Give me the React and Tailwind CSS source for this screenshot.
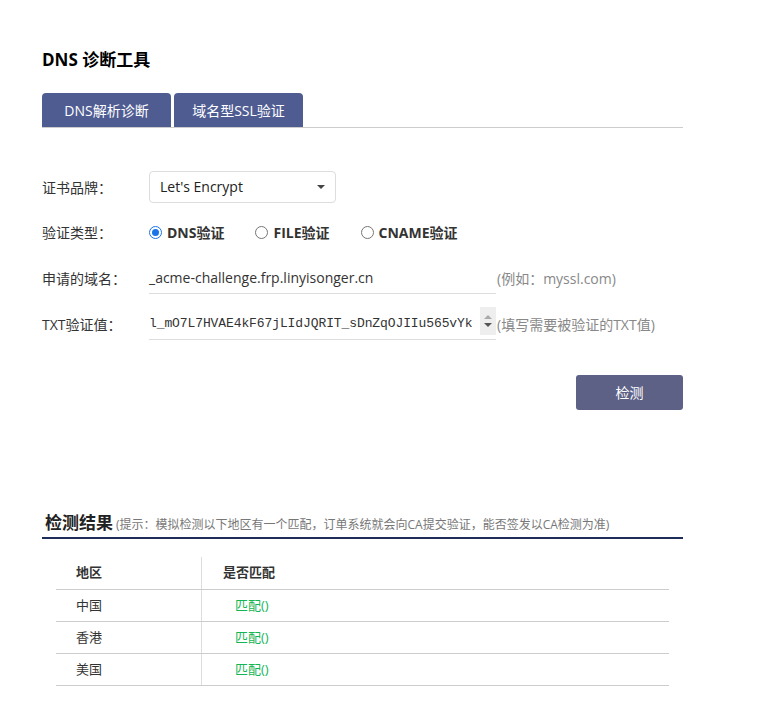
import { useState } from "react";

const rows = ["中国", "香港", "美国"];

const Label = ({ children }) => (
  <div className="w-[107px] shrink-0 text-[14px] text-[#333]">{children}</div>
);

const Radio = ({ checked, label }) => (
  <label className="flex items-center gap-[5px] mr-[31px]">
    <span
      className={
        checked
          ? "w-[13px] h-[13px] rounded-full border border-[#1a73e8] flex items-center justify-center"
          : "w-[13px] h-[13px] rounded-full border border-[#767676]"
      }
    >
      {checked && <span className="w-[7px] h-[7px] rounded-full bg-[#1a73e8]" />}
    </span>
    <span className="font-bold text-[14px] text-[#333]">{label}</span>
  </label>
);

export default function App() {
  const [tab, setTab] = useState(0);

  return (
    <div className="w-[783px] h-[722px] bg-white font-['Open_Sans','Noto_Sans_CJK_SC',sans-serif] text-[#333]">
      <div className="pl-[42px] pt-[48px] w-[683px]">
        <h1 className="text-[17px] font-bold text-black leading-[24px]">DNS 诊断工具</h1>

        <div className="mt-[21px] flex items-end gap-[3px] border-b border-[#ccc]">
          {["DNS解析诊断", "域名型SSL验证"].map((t, i) => (
            <button
              key={t}
              onClick={() => setTab(i)}
              className="w-[129px] h-[34px] rounded-t-[4px] bg-[#4f5c92] text-white text-[14px]"
            >
              {t}
            </button>
          ))}
        </div>

        <div className="mt-[43px] flex flex-col">
          <div className="flex items-center h-[32px]">
            <Label>证书品牌：</Label>
            <div className="w-[187px] h-[32px] border border-[#ddd] rounded-[4px] flex items-center justify-between px-[10px]">
              <span className="text-[14px] text-[#222] mt-[-2px]">Let's Encrypt</span>
              <span className="w-0 h-0 border-l-[4px] border-r-[4px] border-t-[4px] border-l-transparent border-r-transparent border-t-[#444]" />
            </div>
          </div>

          <div className="flex items-center h-[32px] mt-[13px]">
            <Label>验证类型：</Label>
            <Radio checked label="DNS验证" />
            <Radio label="FILE验证" />
            <Radio label="CNAME验证" />
          </div>

          <div className="flex items-center mt-[14px]">
            <Label>申请的域名：</Label>
            <div className="w-[347px] h-[32px] border-b border-[#ddd] flex items-center text-[14px] text-[#333]">
              _acme-challenge.frp.linyisonger.cn
            </div>
            <span className="ml-[1px] text-[14px] text-[#888]">(例如：myssl.com)</span>
          </div>

          <div className="flex items-center mt-[14px]">
            <Label>TXT验证值：</Label>
            <div className="w-[347px] h-[32px] border-b border-[#ddd] flex items-center justify-between">
              <span className="font-['Liberation_Mono',monospace] text-[13px] text-[#333] tracking-[-0.1px]">
                l_mO7L7HVAE4kF67jLIdJQRIT_sDnZqOJIIu565vYk
              </span>
              <span className="w-[16px] h-[28px] bg-[#eee] flex flex-col items-center justify-center gap-[4px] mt-[-6px]">
                <span className="w-0 h-0 border-l-[4px] border-r-[4px] border-b-[4px] border-l-transparent border-r-transparent border-b-[#aaa]" />
                <span className="w-0 h-0 border-l-[4px] border-r-[4px] border-t-[4px] border-l-transparent border-r-transparent border-t-[#555]" />
              </span>
            </div>
            <span className="ml-[1px] text-[14px] text-[#888]">(填写需要被验证的TXT值)</span>
          </div>

          <div className="flex justify-end mt-[35px]">
            <button className="w-[107px] h-[35px] rounded-[3px] bg-[#5d6186] text-white text-[14px]">
              检测
            </button>
          </div>
        </div>

        <div className="mt-[101px] border-b-2 border-[#1e2c5a] pb-[2px] pl-[3px] flex items-end gap-[3px]">
          <span className="text-[17px] font-bold text-[#222] leading-[24px]">检测结果</span>
          <span className="text-[12px] text-[#777] leading-[20px]">
            (提示：模拟检测以下地区有一个匹配，订单系统就会向CA提交验证，能否签发以CA检测为准)
          </span>
        </div>

        <div className="mx-[14px] mt-[18px] text-[13px]">
          <div className="grid grid-cols-[146px_1fr] h-[33px] border-b border-[#ccc]">
            <div className="flex items-center pl-[20px] font-bold text-[#333] border-r border-[#ddd]">地区</div>
            <div className="flex items-center pl-[21px] font-bold text-[#333]">是否匹配</div>
          </div>
          {rows.map((r) => (
            <div key={r} className="grid grid-cols-[146px_1fr] h-[32px] border-b border-[#ccc]">
              <div className="flex items-center pl-[20px] text-[#333] border-r border-[#ddd]">{r}</div>
              <div className="flex items-center pl-[33px] text-[#13b554]">匹配()</div>
            </div>
          ))}
        </div>
      </div>
    </div>
  );
}
